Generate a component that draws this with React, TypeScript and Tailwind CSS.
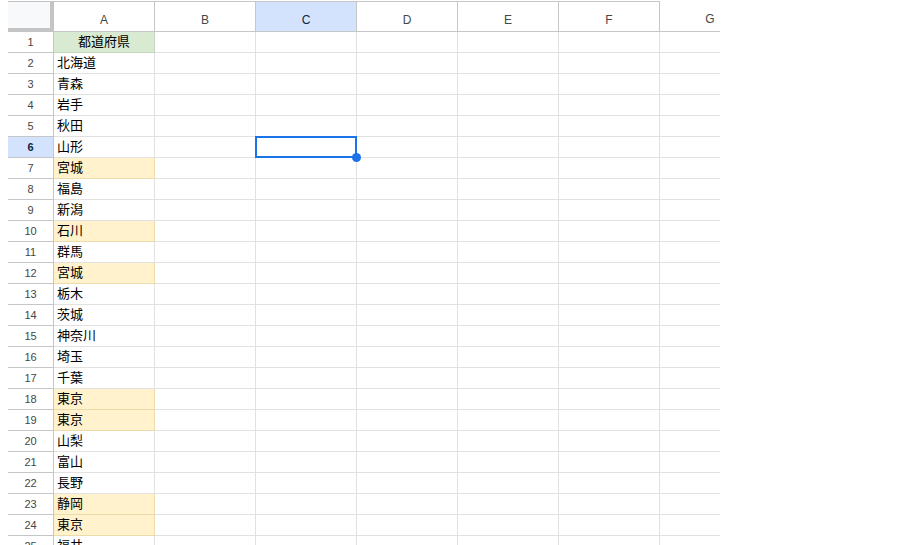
const cols = ["A", "B", "C", "D", "E", "F", "G"];

type Row = { v: string; tone?: "green" | "yellow" };

const rows: Row[] = [
  { v: "都道府県", tone: "green" },
  { v: "北海道" },
  { v: "青森" },
  { v: "岩手" },
  { v: "秋田" },
  { v: "山形" },
  { v: "宮城", tone: "yellow" },
  { v: "福島" },
  { v: "新潟" },
  { v: "石川", tone: "yellow" },
  { v: "群馬" },
  { v: "宮城", tone: "yellow" },
  { v: "栃木" },
  { v: "茨城" },
  { v: "神奈川" },
  { v: "埼玉" },
  { v: "千葉" },
  { v: "東京", tone: "yellow" },
  { v: "東京", tone: "yellow" },
  { v: "山梨" },
  { v: "富山" },
  { v: "長野" },
  { v: "静岡", tone: "yellow" },
  { v: "東京", tone: "yellow" },
  { v: "福井" },
];

const font = { fontFamily: "Arial, 'Liberation Sans', 'Noto Sans CJK JP', sans-serif" };

export default function App() {
  return (
    <div className="w-[900px] h-[545px] bg-white overflow-hidden flex" style={font}>
      {/* 左の余白 */}
      <div className="w-2 shrink-0" />

      <div className="w-[712px] shrink-0 overflow-hidden flex flex-col">
        {/* 列見出し */}
        <div className="flex h-[31px] shrink-0 mt-px">
          <div className="w-[46px] shrink-0 bg-[#f8f9fa] border-t border-r-4 border-b-4 border-[#c4c4c4]" />
          {cols.map((c) => (
            <div
              key={c}
              className={`w-[101px] shrink-0 flex items-center justify-center pt-[6px] text-[12px] border-r border-b border-[#c4c7c5] ${
                c === "G" ? "" : "border-t"
              } ${c === "C" ? "bg-[#d3e3fd] text-[#0b1f44]" : "bg-white text-[#444746]"}`}
            >
              {c}
            </div>
          ))}
        </div>

        {/* 行 */}
        {rows.map((r, i) => {
          const n = i + 1;
          const sel = n === 6;
          const cellA =
            r.tone === "green"
              ? "bg-[#d9ead3] border-[#c5d6bf] justify-center"
              : r.tone === "yellow"
              ? "bg-[#fff2cc] border-[#ecdcab]"
              : "bg-white border-[#e1e1e1]";
          return (
            <div key={n} className="flex h-[21px] shrink-0">
              <div
                className={`w-[46px] shrink-0 flex items-center justify-center text-[11px] border-r border-b border-[#c4c7c5] ${
                  sel ? "bg-[#d3e3fd] font-bold text-[#0b1f44]" : "bg-white text-[#444746]"
                }`}
              >
                {n}
              </div>
              <div
                className={`w-[101px] shrink-0 flex items-center px-[3px] text-[13px] text-black border-r border-b ${cellA}`}
              >
                {r.v}
              </div>
              {cols.slice(1).map((c) => (
                <div
                  key={c}
                  className="relative w-[101px] shrink-0 border-r border-b border-[#e1e1e1]"
                >
                  {sel && c === "C" && (
                    <>
                      <div className="absolute -left-px -top-px w-[102px] h-[22px] border-2 border-[#1a73e8] z-10" />
                      <div className="absolute -right-[5px] -bottom-[5px] w-[9px] h-[9px] rounded-full bg-[#1a73e8] z-20" />
                    </>
                  )}
                </div>
              ))}
            </div>
          );
        })}
      </div>
    </div>
  );
}
